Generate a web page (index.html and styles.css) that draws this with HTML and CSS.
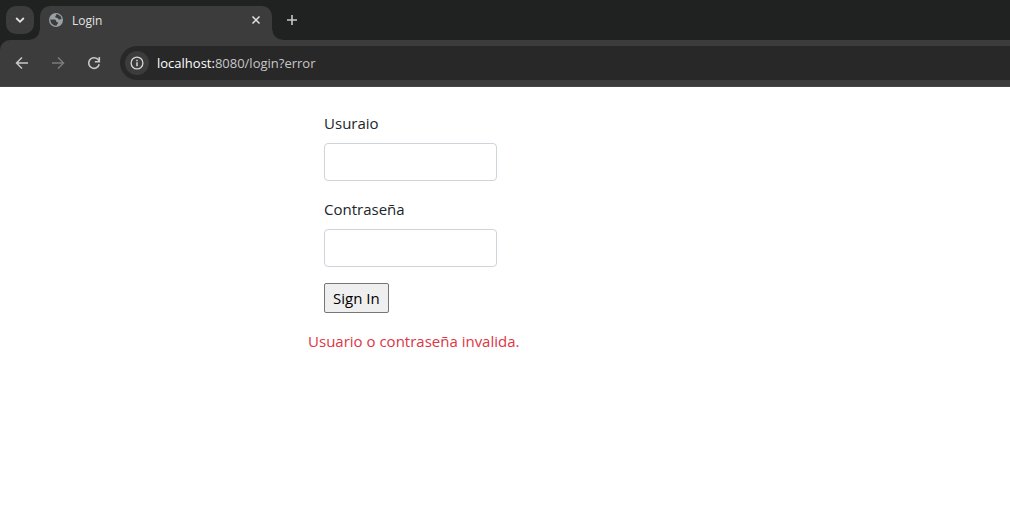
FILE: index.html
```html
<!DOCTYPE html>
<html lang="es">
<head>
<meta charset="utf-8">
<meta name="viewport" content="width=device-width, initial-scale=1">
<title>Login</title>
<link rel="stylesheet" href="styles.css">
</head>
<body>
<header class="browser">
  <div class="tab-strip">
    <button class="tab-search" type="button" aria-label="Search tabs">
      <svg width="10" height="10" viewBox="0 0 10 10"><path d="M1.2 3 5 6.800l3.800-3.800" fill="none" stroke="#e3e3e3" stroke-width="1.800"/></svg>
    </button>
    <div class="tab">
      <svg class="tab-icon" width="16" height="16" viewBox="0 0 16 16"><circle cx="8" cy="8" r="7" fill="#9aa0a6"/><path d="M8.300 2.300C10.800 2.300 13 4 13.600 6.400c-.6 1-1.900 1.300-2.900.800-.7-.4-.6-1.200-1.500-1.300-1.100-.1-2.100-.2-1.900-1.300.1-.7.800-.8.700-1.500zM2.300 7.600h4c1.300 0 1.900.8 1.900 1.700 0 .7.300.9 1.100.9.800 0 1 .6.600 1.300-.6.900-1.200 1-1.300 2.200-3.500.3-6.300-2.500-6.300-6.100z" fill="#3c3c3c"/></svg>
      <span class="tab-title">Login</span>
      <button class="tab-close" type="button" aria-label="Close tab">
        <svg width="10" height="10" viewBox="0 0 10 10"><path d="m1.500 1.500 7 7m0-7-7 7" stroke="#e3e3e3" stroke-width="1.500"/></svg>
      </button>
    </div>
    <button class="new-tab" type="button" aria-label="New tab">
      <svg width="12" height="12" viewBox="0 0 12 12"><path d="M6 1v10M1 6h10" stroke="#c7c7c7" stroke-width="1.600"/></svg>
    </button>
  </div>
  <div class="toolbar">
    <button class="nav" type="button" aria-label="Back">
      <svg width="14" height="14" viewBox="0 0 14 14"><path d="M13 7H2m5-5.500L1.500 7 7 12.500" fill="none" stroke="#c7c7c7" stroke-width="1.500"/></svg>
    </button>
    <button class="nav" type="button" aria-label="Forward" disabled>
      <svg width="14" height="14" viewBox="0 0 14 14"><path d="M1 7h11M7 1.500 12.500 7 7 12.500" fill="none" stroke="#7b7b7b" stroke-width="1.500"/></svg>
    </button>
    <button class="nav" type="button" aria-label="Reload">
      <svg width="14" height="14" viewBox="0 0 14 14"><path d="M12.200 8.200A5.300 5.300 0 1 1 10.800 3.300L12.300 5M12.300 1v4.800H7.800" fill="none" stroke="#c7c7c7" stroke-width="1.600"/></svg>
    </button>
    <div class="address">
      <button class="site-info" type="button" aria-label="View site information">
        <svg width="14" height="14" viewBox="0 0 14 14"><circle cx="7" cy="7" r="5.900" fill="none" stroke="#d6d6d6" stroke-width="1.300"/><path d="M7 6.200v4M7 3.700v1.500" stroke="#d6d6d6" stroke-width="1.500"/></svg>
      </button>
      <span class="url"><span class="host">localhost:</span>8080/login?error</span>
    </div>
  </div>
</header>
<main class="page">
  <form class="login">
    <label class="label" for="user">Usuraio</label>
    <input class="field" id="user" type="text">
    <label class="label" for="password">Contraseña</label>
    <input class="field" id="password" type="password">
    <button class="submit" type="submit">Sign In</button>
  </form>
  <p class="error" role="alert">Usuario o contraseña invalida.</p>
</main>
</body>
</html>
```
FILE: styles.css
```css
* { box-sizing: border-box; }

body {
  margin: 0;
  background: #fff;
  color: #212529;
  font-family: "Open Sans", "Noto Sans", sans-serif;
  font-size: 15px;
  line-height: 24px;
}

button {
  padding: 0;
  border: 0;
  background: none;
  font: inherit;
}

svg { display: block; }

.browser {
  background: #202221;
  color: #e3e3e3;
  font-size: 12px;
}

.tab-strip {
  display: flex;
  height: 40px;
  padding: 6px 6px 0;
}

.tab-search {
  display: grid;
  place-items: center;
  width: 28px;
  height: 28px;
  border-radius: 10px;
  background: #3c3c3c;
}

.tab {
  position: relative;
  display: flex;
  align-items: center;
  gap: 8px;
  width: 232px;
  margin-left: 6px;
  padding: 0 11px 6px 8px;
  border-radius: 10px 10px 0 0;
  background: #3c3c3c;
}

.tab::before,
.tab::after {
  content: "";
  position: absolute;
  bottom: 0;
  width: 10px;
  height: 10px;
}

.tab::before {
  right: 100%;
  background: radial-gradient(circle at 0 0, transparent 9px, #3c3c3c 10px);
}

.tab::after {
  left: 100%;
  background: radial-gradient(circle at 100% 0, transparent 9px, #3c3c3c 10px);
}

.tab-title {
  flex: 1;
  padding-top: 2px;
}

.new-tab {
  display: grid;
  place-items: center;
  width: 28px;
  height: 28px;
  margin-left: 6px;
}

.toolbar {
  display: flex;
  align-items: center;
  padding: 6px 0 6px 4px;
  border-bottom: 1px solid #484646;
  border-radius: 10px 0 0;
  background: #3c3c3c;
}

.nav {
  display: grid;
  place-items: center;
  width: 36px;
  height: 34px;
}

.address {
  display: flex;
  flex: 1;
  align-items: center;
  gap: 8px;
  height: 34px;
  margin-left: 8px;
  padding-left: 5px;
  border-radius: 17px 0 0 17px;
  background: #282828;
}

.site-info {
  display: grid;
  place-items: center;
  width: 24px;
  height: 24px;
  border-radius: 50%;
  background: #3c3c3c;
}

.url {
  color: #c7c7c7;
  font-size: 13px;
}

.host { color: #fff; }

.page {
  padding: 24px 16px 24px 30.5%;
}

.login {
  display: flex;
  flex-direction: column;
  align-items: flex-start;
  padding-left: 16px;
}

.label { margin-bottom: 8px; }

.field {
  width: 173px;
  height: 38px;
  margin-bottom: 16px;
  padding: 6px 12px;
  border: 1px solid #ced4da;
  border-radius: 4px;
  background: #fff;
  font: inherit;
}

.submit {
  height: 30px;
  padding: 0 8px;
  border: 1px solid #767676;
  border-radius: 2px;
  background: #efefef;
  color: #000;
}

.error {
  margin: 16px 0 0;
  color: #dc3545;
}
```
